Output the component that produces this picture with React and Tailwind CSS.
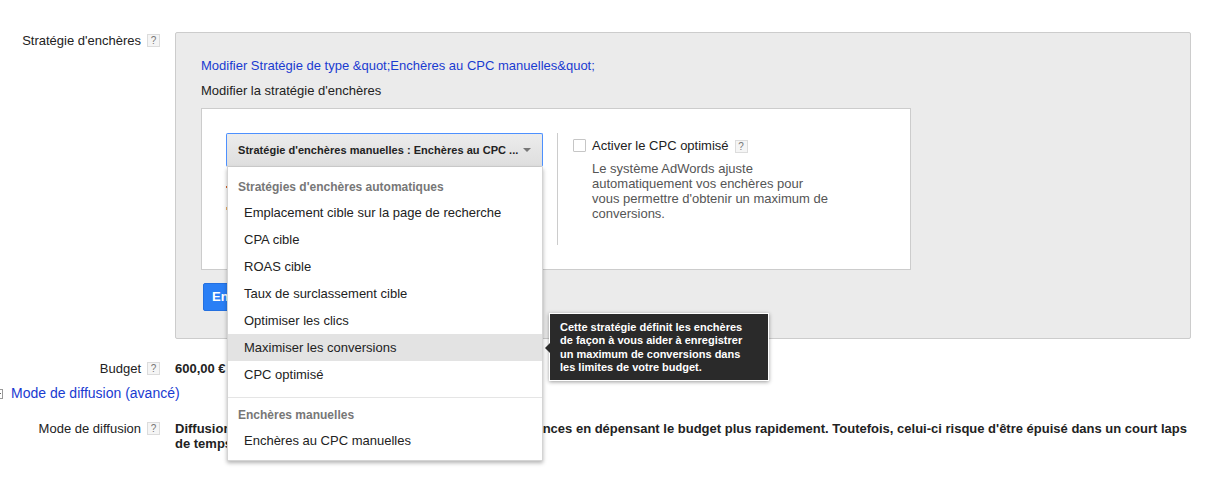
function Help() {
  return (
    <span className="inline-flex items-center justify-center w-[13px] h-[13px] shrink-0 border border-[#dcdcdc] bg-[#f5f5f5] text-[10px] leading-none text-[#777]">?</span>
  )
}

function Label({ text }) {
  return (
    <div className="w-[175px] shrink-0 flex justify-end items-center gap-[6px] pr-[15px] h-[15px] text-[#222]">
      <span className="whitespace-nowrap">{text}</span>
      <Help />
    </div>
  )
}

function Item({ text, active }) {
  return (
    <div className={active ? "h-[27px] pl-[16px] flex items-center bg-[#e3e3e3] text-[#222]" : "h-[27px] pl-[16px] flex items-center text-[#222]"}>{text}</div>
  )
}

function GroupTitle({ text }) {
  return <div className="h-[15px] pl-[10px] flex items-center text-[12px] font-bold text-[#777]">{text}</div>
}

function Menu() {
  return (
    <div className="absolute left-[227px] top-[167px] w-[316px] h-[294px] bg-white border border-[#d4d4d4] border-t-0 shadow-[0_2px_4px_rgba(0,0,0,0.3)] pt-[12px]">
      <GroupTitle text="Stratégies d'enchères automatiques" />
      <div className="mt-[5px]">
        <Item text="Emplacement cible sur la page de recherche" />
        <Item text="CPA cible" />
        <Item text="ROAS cible" />
        <Item text="Taux de surclassement cible" />
        <Item text="Optimiser les clics" />
        <Item text="Maximiser les conversions" active />
        <Item text="CPC optimisé" />
      </div>
      <div className="mt-[9px] border-t border-[#e5e5e5]"></div>
      <div className="mt-[9px]">
        <GroupTitle text="Enchères manuelles" />
      </div>
      <div className="mt-[5px]">
        <Item text="Enchères au CPC manuelles" />
      </div>
    </div>
  )
}

function Tip() {
  return (
    <div className="absolute left-[549px] top-[313px] w-[220px] h-[68px] bg-[#2a2a2a] border border-white shadow-[0_1px_4px_rgba(0,0,0,0.4)] pl-[10px] pt-[7px] text-[11px] leading-[13.3px] font-bold text-white">
      <div className="absolute left-[-5px] top-[29px] w-0 h-0 border-y-[5px] border-y-transparent border-r-[5px] border-r-[#2a2a2a]"></div>
      <div className="whitespace-nowrap">Cette stratégie définit les enchères</div>
      <div className="whitespace-nowrap">de façon à vous aider à enregistrer</div>
      <div className="whitespace-nowrap">un maximum de conversions dans</div>
      <div className="whitespace-nowrap">les limites de votre budget.</div>
    </div>
  )
}

export default function App() {
  return (
    <div className="relative w-[1218px] h-[495px] overflow-hidden bg-white text-[13px] text-[#222] font-['Liberation_Sans',Arial,sans-serif]">
      <div className="flex pt-[32px]">
        <div className="pt-[1px]">
          <Label text="Stratégie d'enchères" />
        </div>
        <div className="w-[1016px] h-[307px] bg-[#ebebeb] border border-[#cccccc] rounded-[2px] pl-[25px] pt-[24px]">
          <div className="h-[17px] flex items-center text-[#1a3bd1]">Modifier Stratégie de type &amp;quot;Enchères au CPC manuelles&amp;quot;</div>
          <div className="mt-[8px] h-[17px] flex items-center text-[#222]">Modifier la stratégie d'enchères</div>
          <div className="mt-[9px] w-[710px] h-[162px] bg-white border border-[#cccccc] pl-[24px] pt-[24px] flex">
            <div className="w-[317px] h-[34px] shrink-0 rounded-[2px] border border-[#4d90fe] border-b-[#d0d0d0] bg-gradient-to-b from-[#ececec] to-[#dedede] pl-[11px] pr-[11px] flex items-center justify-between">
              <span className="text-[11px] tracking-[0.04px] font-bold text-[#222] whitespace-nowrap">Stratégie d'enchères manuelles : Enchères au CPC ...</span>
              <span className="w-0 h-0 border-x-[4px] border-x-transparent border-t-[4px] border-t-[#777]"></span>
            </div>
            <div className="ml-[14px] w-[1px] h-[112px] bg-[#cccccc]"></div>
            <div className="ml-[15px] pt-[5px]">
              <div className="flex items-center h-[15px]">
                <span className="w-[13px] h-[13px] border border-[#c6c6c6] rounded-[1px] bg-white"></span>
                <span className="ml-[6px] text-[#222]">Activer le CPC optimisé</span>
                <span className="ml-[6px]"><Help /></span>
              </div>
              <div className="mt-[8px] ml-[19px] w-[250px] leading-[15px] text-[#555]">
                Le système AdWords ajuste<br />automatiquement vos enchères pour<br />vous permettre d'obtenir un maximum de<br />conversions.
              </div>
            </div>
          </div>
          <div className="mt-[13px] w-[110px] h-[28px] ml-[2px] bg-[#2a7ff5] border border-[#2470e0] rounded-[2px] pl-[8px] flex items-center text-[13px] font-bold text-white">Enregistrer</div>
        </div>
      </div>

      <div className="flex mt-[22px]">
        <Label text="Budget" />
        <div className="font-bold h-[15px] flex items-center">600,00 €</div>
      </div>

      <div className="flex items-center mt-[9px] -ml-[7px] h-[17px]">
        <span className="relative w-[10px] h-[10px] border border-[#999] bg-white flex items-center justify-center">
          <span className="w-[6px] h-[1px] bg-[#666]"></span>
        </span>
        <span className="ml-[8px] text-[14px] text-[#1a3bd1]">Mode de diffusion (avancé)</span>
      </div>

      <div className="flex mt-[19px]">
        <Label text="Mode de diffusion" />
        <div className="w-[1020px] font-bold leading-[15px] text-[#222]">
          Diffusion accélérée : <span className="ml-[5px]">diffusera plus fréquemment vos annonces en dépensant le budget plus rapidement. Toutefois, celui-ci risque d'être épuisé dans un court laps de temps.</span>
        </div>
      </div>

      <div className="absolute left-[226px] top-[186px] w-[2px] h-[2px] bg-[#d9662a]"></div>
      <div className="absolute left-[226px] top-[207px] w-[2px] h-[3px] bg-[#eeb36a]"></div>
      <Menu />
      <Tip />
    </div>
  )
}
